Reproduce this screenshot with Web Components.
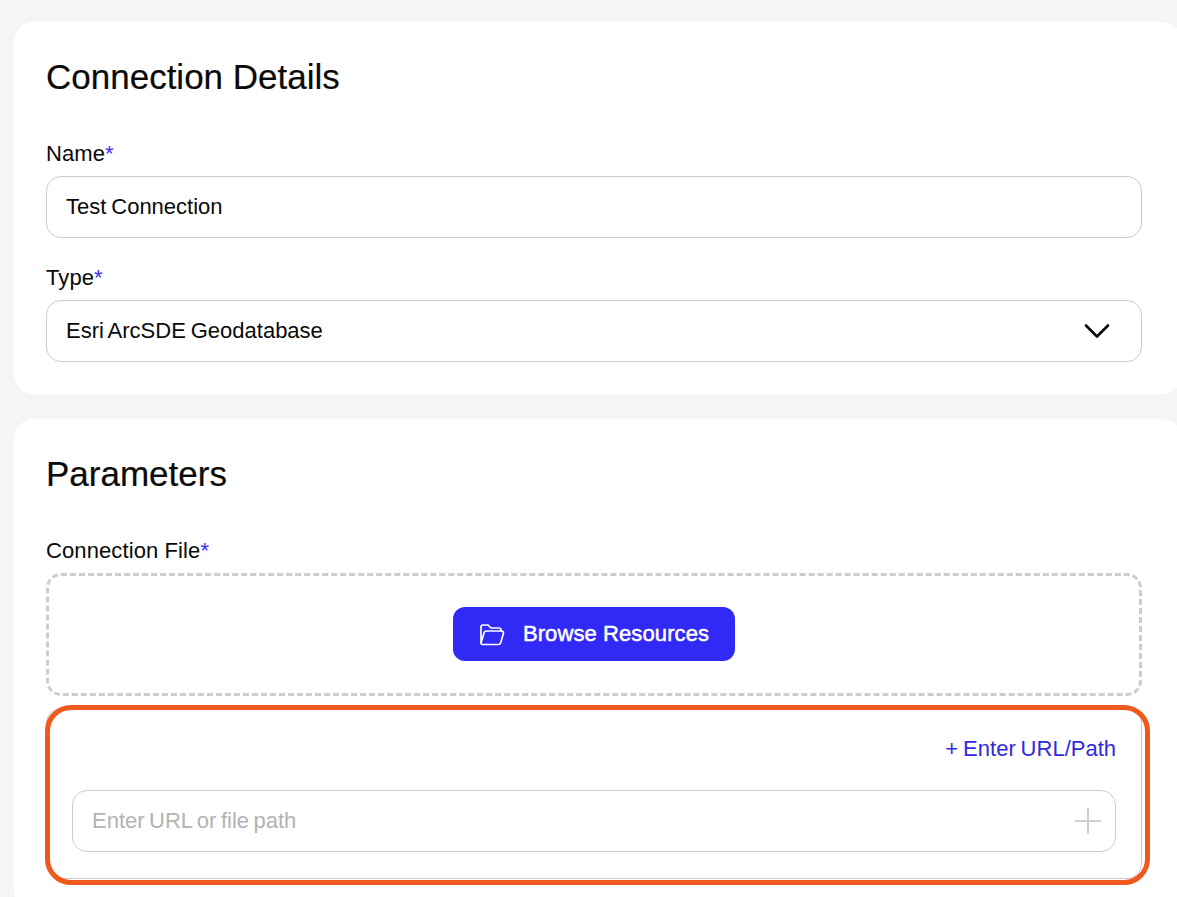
<!DOCTYPE html>
<html>
<head>
<meta charset="utf-8">
<style>
	html, body { margin: 0; height: 897px; overflow: hidden; background: #f5f5f5; }
	body { font-family: "Liberation Sans", Arial, sans-serif; color: #0a0a0a; }
	main { display: flex; flex-direction: column; gap: 25px; padding: 22px 0 0 14px; width: 1128px; }
</style>
</head>
<body>
<main>
	<form-card heading="Connection Details">
		<form-field label="Name"><text-box value="Test Connection"></text-box></form-field>
		<form-field label="Type"><text-box value="Esri ArcSDE Geodatabase" icon="chevron"></text-box></form-field>
	</form-card>
	<form-card heading="Parameters">
		<form-field label="Connection File">
			<drop-zone></drop-zone>
			<url-panel></url-panel>
		</form-field>
	</form-card>
</main>
<script>
class FormCard extends HTMLElement {
	constructor() {
		super();
		this.attachShadow({ mode: "open" }).innerHTML = `
			<style>
				:host { display: block; background: #fff; border-radius: 20px; padding: 32px 40px 32px 32px; margin-right: -40px; }
				h2 { margin: 0 0 40px; font-size: 35px; line-height: 46px; font-weight: 400; -webkit-text-stroke: 0.2px #0a0a0a; }
				.rows { display: flex; flex-direction: column; gap: 26px; }
			</style>
			<h2>${this.getAttribute("heading")}</h2>
			<div class="rows"><slot></slot></div>`;
	}
}

class FormField extends HTMLElement {
	constructor() {
		super();
		this.attachShadow({ mode: "open" }).innerHTML = `
			<style>
				:host { display: block; }
				label { display: block; font-size: 22px; line-height: 28px; margin-bottom: 8px; letter-spacing: 0.1px; }
				span { color: #3b2ff5; }
			</style>
			<label>${this.getAttribute("label")}<span>*</span></label>
			<slot></slot>`;
	}
}

class TextBox extends HTMLElement {
	constructor() {
		super();
		const icons = {
			chevron: `<svg class="chevron" width="26" height="16" viewBox="0 0 26 16" fill="none" stroke="#0a0a0a" stroke-width="2.6" stroke-linecap="round" stroke-linejoin="round"><path d="M2 2.5l11 11 11-11"/></svg>`,
			plus: `<svg width="26" height="26" viewBox="0 0 26 26" fill="none" stroke="#d0d0d0" stroke-width="2"><path d="M13 0v26M0 13h26"/></svg>`,
		};
		const muted = this.hasAttribute("placeholder");
		this.attachShadow({ mode: "open" }).innerHTML = `
			<style>
				:host { display: flex; align-items: center; justify-content: space-between; box-sizing: border-box; height: 62px; padding: 0 14px 0 19px; background: #fff; border: 1px solid #cbcbcb; border-radius: 15px; font-size: 22px; word-spacing: ${muted ? "-1.6px" : "-1.2px"}; }
				.text { color: ${muted ? "#b3b3b3" : "#0a0a0a"}; }
				svg { display: block; }
				.chevron { margin-right: 17px; }
			</style>
			<span class="text">${this.getAttribute("value") || this.getAttribute("placeholder")}</span>
			${icons[this.getAttribute("icon")] || ""}`;
	}
}
customElements.define("text-box", TextBox);

class DropZone extends HTMLElement {
	constructor() {
		super();
		this.attachShadow({ mode: "open" }).innerHTML = `
			<style>
				:host { display: flex; align-items: center; justify-content: center; box-sizing: border-box; height: 123px; padding-bottom: 1px; border: 3px dashed #cdcdcd; border-radius: 15px; }
				button { display: flex; align-items: center; gap: 18px; height: 54px; padding: 0 26px; border: 0; border-radius: 12px; background: #3129f6; color: #fff; font: 400 22px "Liberation Sans", Arial, sans-serif; -webkit-text-stroke: 0.5px #fff; letter-spacing: 0.1px; }
				svg { display: block; }
			</style>
			<button type="button">
				<svg width="26" height="24" viewBox="0 0 26 24" fill="none" stroke="#fff" stroke-width="1.7" stroke-linejoin="round" stroke-linecap="round">
					<path d="M2 21V5a2 2 0 0 1 2-2h5l3 3h8a2 2 0 0 1 2 2v1"/>
					<path d="M2 21c0 1 .6 1.5 1.6 1.5h16.2c.9 0 1.5-.5 1.8-1.4l2.8-9.6c.3-1.3-.4-2.5-1.8-2.5H7.2c-1 0-1.7.5-2 1.5z"/>
				</svg>
				Browse Resources
			</button>`;
	}
}

class UrlPanel extends HTMLElement {
	constructor() {
		super();
		this.attachShadow({ mode: "open" }).innerHTML = `
			<style>
				:host { display: block; position: relative; box-sizing: border-box; height: 171px; margin-top: 12px; padding: 25px 25px 0; border: 1px solid #cbcbcb; border-radius: 15px; }
				a { display: block; text-align: right; color: #3129e0; font-size: 22px; line-height: 30px; margin-bottom: 26px; word-spacing: -1.2px; }
				.note { position: absolute; left: -2px; right: -9px; top: -4px; bottom: -7px; border: 5px solid #f0591d; border-radius: 26px; pointer-events: none; }
			</style>
			<a>+ Enter URL/Path</a>
			<text-box placeholder="Enter URL or file path" icon="plus"></text-box>
			<div class="note"></div>`;
	}
}

customElements.define("form-card", FormCard);
customElements.define("form-field", FormField);
customElements.define("drop-zone", DropZone);
customElements.define("url-panel", UrlPanel);
</script>
</body>
</html>
